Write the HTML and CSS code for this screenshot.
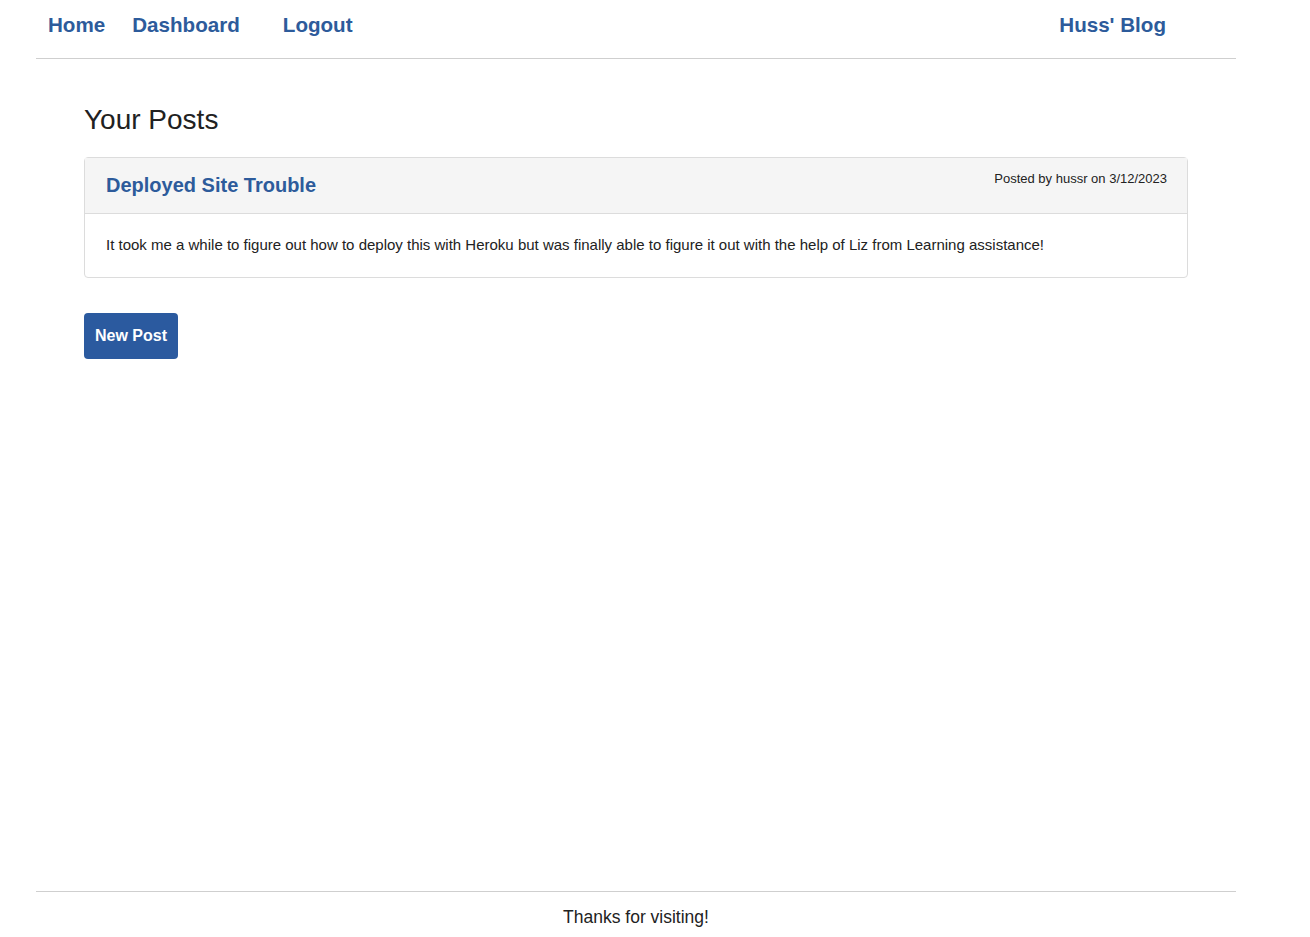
FILE: index.html
```html
<!DOCTYPE html>
<html lang="en">
<head>
<meta charset="utf-8">
<title>Huss' Blog</title>
<link rel="stylesheet" href="styles.css">
</head>
<body>
<div class="page">
  <header class="topbar">
    <nav class="nav">
      <a class="nav-link home" href="#">Home</a>
      <a class="nav-link dash" href="#">Dashboard</a>
      <a class="nav-link" href="#">Logout</a>
    </nav>
    <a class="brand" href="#">Huss' Blog</a>
  </header>
  <main class="main">
    <h2 class="page-title">Your Posts</h2>
    <article class="card">
      <div class="card-header">
        <h3 class="card-title">Deployed Site Trouble</h3>
        <span class="meta">Posted by hussr on 3/12/2023</span>
      </div>
      <div class="card-body">
        It took me a while to figure out how to deploy this with Heroku but was finally able to figure it out with the help of Liz from Learning assistance!
      </div>
    </article>
    <button class="btn">New Post</button>
  </main>
  <footer class="footer">Thanks for visiting!</footer>
</div>
</body>
</html>
```

FILE: styles.css
```css
* { box-sizing: border-box; }
html, body { margin: 0; padding: 0; }
body {
  font-family: "Liberation Sans", Arial, sans-serif;
  color: #212529;
  background: #fff;
}
.page {
  width: 1200px;
  margin-left: 36px;
  min-height: 937px;
  display: flex;
  flex-direction: column;
}
.topbar {
  height: 59px;
  border-bottom: 1px solid #cfcfcf;
  display: flex;
  align-items: flex-start;
  justify-content: space-between;
  padding: 12px 70px 0 12px;
}
.nav { display: flex; }
.nav-link, .brand {
  color: #2d5b9b;
  font-weight: bold;
  font-size: 20.6px;
  text-decoration: none;
  line-height: 26px;
}
.home { margin-right: 27px; }
.dash { margin-right: 43px; }
.main {
  flex: 1;
  padding: 0 48px;
}
.page-title {
  font-weight: normal;
  font-size: 28px;
  line-height: 34px;
  margin: 44px 0 0;
  color: #212121;
}
.card {
  margin-top: 20px;
  width: 1104px;
  border: 1px solid #dcdcdc;
  border-radius: 4px;
}
.card-header {
  height: 56px;
  background: #f5f5f5;
  border-bottom: 1px solid #dcdcdc;
  display: flex;
  justify-content: space-between;
  align-items: flex-start;
  padding: 0 20px 0 21px;
}
.card-title {
  margin: 15px 0 0;
  font-size: 20px;
  line-height: 24px;
  color: #2d5b9b;
  font-weight: bold;
}
.meta {
  margin-top: 13px;
  font-size: 13px;
  line-height: 16px;
  color: #222;
}
.card-body {
  padding: 21px 21px 22px;
  font-size: 15px;
  line-height: 20px;
  color: #222;
}
.btn {
  margin-top: 35px;
  display: block;
  background: #2b5a9f;
  color: #fff;
  border: 0;
  border-radius: 4px;
  height: 46px;
  padding: 0 11px;
  font-family: "Liberation Sans", Arial, sans-serif;
  font-weight: bold;
  font-size: 16px;
}
.footer {
  height: 46px;
  border-top: 1px solid #cfcfcf;
  text-align: center;
  font-size: 17.5px;
  line-height: 22px;
  padding-top: 14px;
  color: #222;
}
```
